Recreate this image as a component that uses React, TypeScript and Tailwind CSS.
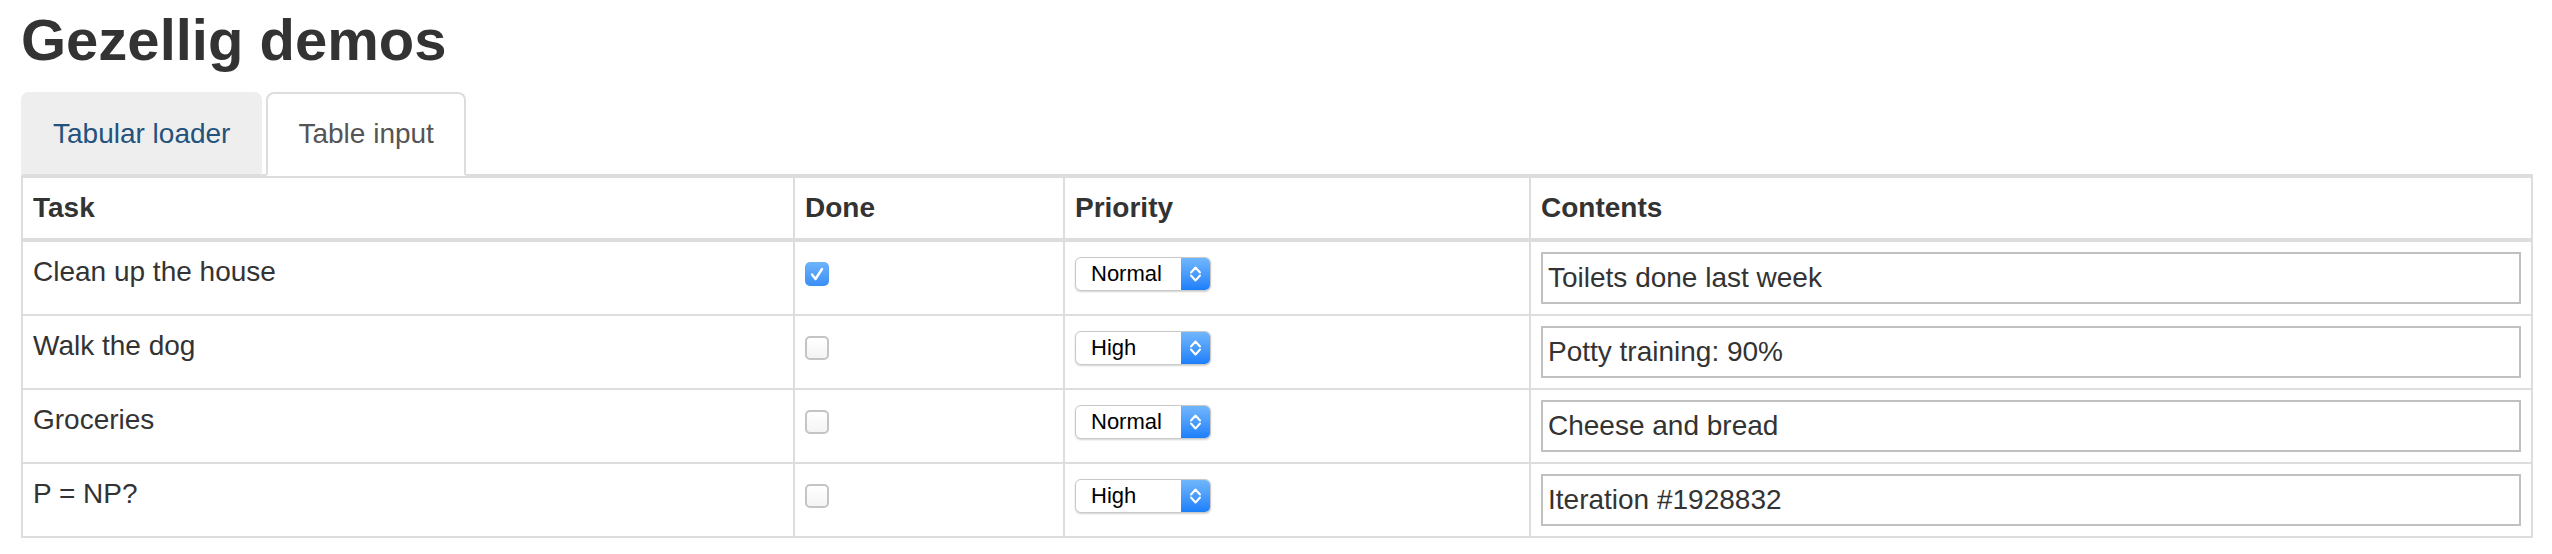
import React from 'react';

type Task = {
  name: string;
  done: boolean;
  priority: 'Normal' | 'High';
  contents: string;
};

const tasks: Task[] = [
  { name: 'Clean up the house', done: true, priority: 'Normal', contents: 'Toilets done last week' },
  { name: 'Walk the dog', done: false, priority: 'High', contents: 'Potty training: 90%' },
  { name: 'Groceries', done: false, priority: 'Normal', contents: 'Cheese and bread' },
  { name: 'P = NP?', done: false, priority: 'High', contents: 'Iteration #1928832' },
];

const Checkbox: React.FC<{ checked: boolean }> = ({ checked }) =>
  checked ? (
    <div className="mt-[10px] flex h-[24px] w-[24px] items-center justify-center rounded-[5px] bg-gradient-to-b from-[#6db4fb] to-[#3a8ef6]">
      <svg width="24" height="24" viewBox="0 0 24 24" fill="none">
        <path d="M7 12.5 L10.5 17 L17 7" stroke="white" strokeWidth="2.4" strokeLinecap="round" strokeLinejoin="round" />
      </svg>
    </div>
  ) : (
    <div className="mt-[10px] h-[24px] w-[24px] rounded-[5px] border-2 border-[#c4c4c4] bg-gradient-to-b from-white to-[#f4f4f4]" />
  );

const PrioritySelect: React.FC<{ value: string }> = ({ value }) => (
  <div className="mt-[5px] flex h-[34px] w-[136px] overflow-hidden rounded-[6px] border border-[#c9c9c9] bg-white shadow-[0_1px_2px_rgba(0,0,0,0.18)]">
    <select
      defaultValue={value}
      className="h-full flex-1 appearance-none bg-transparent pl-[15px] text-[22px] leading-[32px] text-black outline-none"
    >
      <option>Normal</option>
      <option>High</option>
    </select>
    <div className="flex w-[29px] items-center justify-center bg-gradient-to-b from-[#70b6fb] to-[#1b7ffb]">
      <svg width="29" height="34" viewBox="0 0 29 34" fill="none">
        <path d="M10 15.5 L14.5 10.5 L19 15.5" stroke="white" strokeWidth="2" strokeLinecap="round" strokeLinejoin="round" />
        <path d="M10 18.5 L14.5 23.5 L19 18.5" stroke="white" strokeWidth="2" strokeLinecap="round" strokeLinejoin="round" />
      </svg>
    </div>
  </div>
);

const App: React.FC = () => {
  return (
    <div className="min-h-screen bg-white pl-[21px] pr-[19px] font-['Liberation_Sans',Arial,sans-serif] text-[#333]">
      {/* title */}
      <h1 className="mt-[8px] mb-[20px] text-[58px] leading-[64px] font-bold text-[#333]">Gezellig demos</h1>

      {/* tabs */}
      <div className="flex border-b-2 border-[#ddd] text-[28px] leading-[40px]">
        <div className="-mb-[2px] mr-[4px] rounded-t-[8px] border-2 border-[#eee] border-b-[#ddd] bg-[#eee] px-[30px] py-[20px] text-[#23527c]">
          Tabular loader
        </div>
        <div className="-mb-[2px] rounded-t-[8px] border-2 border-[#ddd] border-b-white bg-white px-[30px] py-[20px] text-[#555]">
          Table input
        </div>
      </div>

      {/* table */}
      <table className="w-full table-fixed border-collapse border-2 border-[#ddd] text-[28px] leading-[40px] text-[#333]">
        <colgroup>
          <col className="w-[772px]" />
          <col className="w-[270px]" />
          <col className="w-[466px]" />
          <col />
        </colgroup>
        <thead>
          <tr>
            <th className="border-2 border-b-4 border-[#ddd] p-[10px] text-left align-top font-bold">Task</th>
            <th className="border-2 border-b-4 border-[#ddd] p-[10px] text-left align-top font-bold">Done</th>
            <th className="border-2 border-b-4 border-[#ddd] p-[10px] text-left align-top font-bold">Priority</th>
            <th className="border-2 border-b-4 border-[#ddd] p-[10px] text-left align-top font-bold">Contents</th>
          </tr>
        </thead>
        <tbody>
          {tasks.map((t) => (
            <tr key={t.name}>
              <td className="border-2 border-[#ddd] p-[10px] align-top">{t.name}</td>
              <td className="border-2 border-[#ddd] p-[10px] align-top">
                <Checkbox checked={t.done} />
              </td>
              <td className="border-2 border-[#ddd] p-[10px] align-top">
                <PrioritySelect value={t.priority} />
              </td>
              <td className="border-2 border-[#ddd] p-[10px] align-top">
                <input
                  type="text"
                  defaultValue={t.contents}
                  className="block h-[52px] w-full border-2 border-[#c0c0c0] bg-white px-[5px] text-[28px] text-[#333] outline-none"
                />
              </td>
            </tr>
          ))}
        </tbody>
      </table>
    </div>
  );
};

export default App;
